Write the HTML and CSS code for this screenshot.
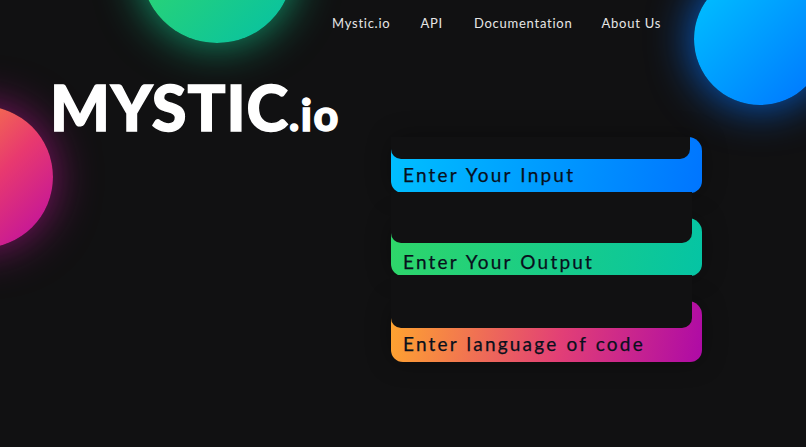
FILE: index.html
```html
<!DOCTYPE html>
<html lang="en">
<head>
<meta charset="utf-8">
<title>Mystic.io</title>
<link rel="stylesheet" href="styles.css">
</head>
<body>
<div class="orb orb-green"></div>
<div class="orb orb-blue"></div>
<div class="orb orb-pink"></div>
<nav class="nav">
  <a class="nav-link nav-a">Mystic.io</a>
  <a class="nav-link nav-b">API</a>
  <a class="nav-link nav-c">Documentation</a>
  <a class="nav-link">About Us</a>
</nav>
<main class="main">
  <h1 class="logo">MYSTIC<span class="logo-small">.io</span></h1>
  <form class="fields">
    <div class="field field-blue">
      <div class="mask mask-1"></div>
      <label class="field-label label-1">Enter Your Input</label>
    </div>
    <div class="field field-green">
      <div class="mask mask-2"></div>
      <label class="field-label label-2">Enter Your Output</label>
    </div>
    <div class="field field-magenta">
      <div class="mask mask-3"></div>
      <label class="field-label label-3">Enter language of code</label>
    </div>
  </form>
</main>
</body>
</html>
```
FILE: styles.css
```css
* { box-sizing: border-box; }
html, body { margin: 0; height: 100%; }
body {
  position: relative;
  width: 806px;
  height: 447px;
  overflow: hidden;
  background: #111112;
  font-family: "Lato", "Liberation Sans", sans-serif;
}
.orb { position: absolute; border-radius: 50%; }
.orb-green {
  left: 141px; top: -109px; width: 152px; height: 152px;
  background: linear-gradient(135deg, #3bdc5e, #04c0a6);
  box-shadow: 0 0 45px rgba(16, 200, 140, .8);
}
.orb-blue {
  left: 694px; top: -27px; width: 132px; height: 132px;
  background: linear-gradient(135deg, #00c6ff, #0072ff);
  box-shadow: 0 0 45px rgba(0, 114, 255, .85);
}
.orb-pink {
  left: -89px; top: 106px; width: 142px; height: 142px;
  background: linear-gradient(135deg, #ffa02e, #e8396f 55%, #b90ba6);
  box-shadow: 0 0 45px rgba(190, 20, 150, .7);
}
.nav {
  position: relative;
  display: flex;
  padding: 14px 0 0 332px;
}
.nav-link {
  color: #e6e6e6;
  font-size: 13px;
  line-height: 18px;
  letter-spacing: .75px;
  white-space: nowrap;
}
.nav-a { margin-right: 30px; }
.nav-b { margin-right: 31px; }
.nav-c { margin-right: 29px; }
.main {
  position: relative;
  display: flex;
  align-items: flex-start;
  padding: 0 0 0 50px;
}
.logo {
  width: 341px;
  margin: 37px 0 0;
  color: #fff;
  font-size: 63px;
  font-weight: 900;
  line-height: 76px;
  letter-spacing: 1px;
  white-space: nowrap;
  -webkit-text-stroke: 1.4px #fff;
}
.logo-small { font-size: 43px; letter-spacing: 1.5px; }
.fields {
  display: flex;
  flex-direction: column;
  gap: 25px;
  width: 311px;
  margin-top: 105px;
}
.field {
  display: flex;
  flex-direction: column;
  width: 311px;
  border-radius: 14px 14px 12px 12px;
  box-shadow: 0 0 24px rgba(0, 0, 0, .35);
}
.field-blue { background: linear-gradient(100deg, #00c0ff, #0075ff); }
.field-green { background: linear-gradient(100deg, #2fd669, #05c4a4); }
.field-magenta { background: linear-gradient(100deg, #ffa62e, #e23f76 55%, #ae0aa6); }
.mask {
  flex: none;
  background: #111112;
  border-radius: 0 0 10px 10px;
}
.mask-1 { width: 299px; height: 22px; margin-top: 0; }
.mask-2 { width: 301px; height: 51px; margin-top: -26px; }
.mask-3 { width: 301px; height: 53px; margin-top: -26px; }
.field-label {
  padding-left: 12px;
  color: #08101c;
  font-size: 19px;
  font-weight: 400;
  letter-spacing: 2.2px;
  word-spacing: 1px;
  white-space: nowrap;
  -webkit-text-stroke: .25px #08101c;
}
.label-1 { height: 34px; line-height: 32px; }
.label-2 { height: 33px; line-height: 37px; }
.label-3 { height: 34px; line-height: 32px; }
```
